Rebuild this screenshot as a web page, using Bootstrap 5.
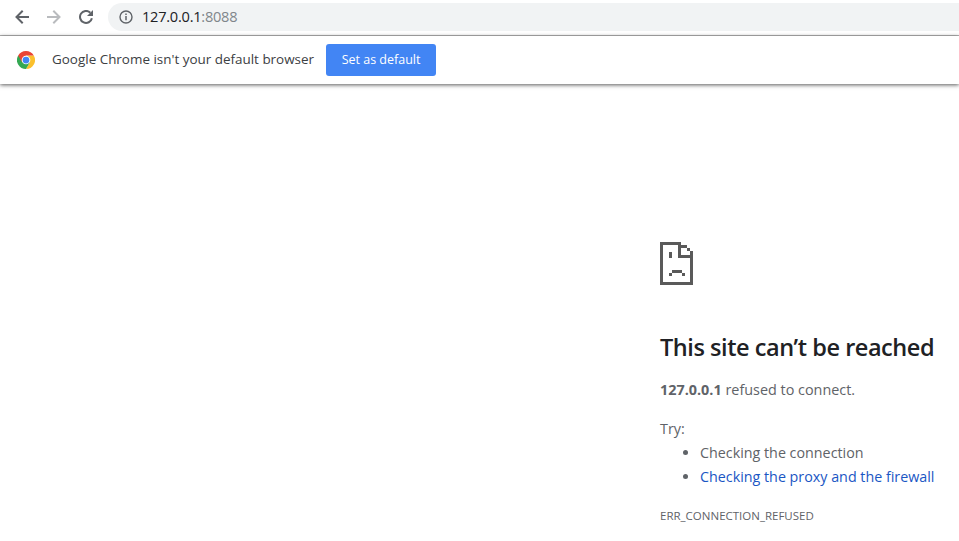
<!DOCTYPE html>
<html lang="en">
<head>
<meta charset="utf-8">
<title>127.0.0.1</title>
<link href="https://cdn.jsdelivr.net/npm/bootstrap@5.3.0/dist/css/bootstrap.min.css" rel="stylesheet">
<style>
html,body{height:100%;overflow:hidden}
body{font-family:"Open Sans","Noto Sans","Liberation Sans",sans-serif;background:#fff;color:#5f6368}
.chrome-bar{height:36px;border-bottom:1px solid #b5b5b5;padding-left:15px}
.tool-slot{width:14px;height:14px;margin-right:18px;margin-top:10px;line-height:0}
.tool-slot:nth-child(3){margin-right:15px}
.omni{height:28px;margin-top:3px;background:#f1f3f4;border-radius:14px 0 0 14px;padding-left:11px;font-size:14.6px;color:#202124;letter-spacing:-.25px}
.omni-port{color:#80868b}
.omni svg{margin-right:9px}
.info-strip{height:48px;padding-left:17px;box-shadow:0 1px 4px rgba(0,0,0,.65);position:relative;font-size:13.45px;color:#3c4043}
.info-text{margin-left:17px;margin-right:12px;margin-top:-2px}
.btn.set-default{background:#4285f4;border:0;color:#fff;font-size:12.5px;font-weight:500;width:110px;height:32px;padding:0;border-radius:3px}
.err-pane{padding:158px 0 0 660px;width:959px}
.err-icon{display:block;margin-bottom:46px}
.err-pane h1{font-size:23.5px;font-weight:600;color:#202124;line-height:32px;margin:0 0 17px;white-space:nowrap;letter-spacing:-.45px}
.err-pane p{font-size:14.4px;line-height:20px;margin:0;white-space:nowrap}
.err-host{font-weight:700}
.try-label{margin-top:19px!important}
.try-list{font-size:14.3px;line-height:20px;margin:4px 0 0;padding-left:40px;list-style:disc;white-space:nowrap}
.try-list li{margin-bottom:4px}
.try-list a{color:#1a56c4;text-decoration:none}
.err-code{font-size:11.5px;line-height:16px;margin-top:21px;color:#5f6368;white-space:nowrap}
</style>
</head>
<body>
<div class="chrome-bar d-flex align-items-start">
  <div class="tool-slot">
    <svg width="14" height="14" viewBox="0 0 14 14" fill="none" stroke="#5f6368" stroke-width="2"><path d="M14 7H2M7.7 .8 1.5 7l6.2 6.2"/></svg>
  </div>
  <div class="tool-slot">
    <svg width="14" height="14" viewBox="0 0 14 14" fill="none" stroke="#b9bbbe" stroke-width="2"><path d="M0 7h12M6.3 .8 12.5 7l-6.2 6.2"/></svg>
  </div>
  <div class="tool-slot">
    <svg width="14" height="14" viewBox="0 0 14 14" fill="none"><path d="M11.3 2.7A6 6 0 1 0 12.9 8.2" stroke="#5f6368" stroke-width="2"/><path d="M14 0V6H8z" fill="#5f6368"/></svg>
  </div>
  <div class="omni flex-grow-1 d-flex align-items-center">
    <svg width="14" height="14" viewBox="0 0 14 14" fill="none"><circle cx="7" cy="7" r="6" stroke="#5f6368" stroke-width="1.4"/><path d="M7 6v4.2M7 3.4v1.5" stroke="#5f6368" stroke-width="1.5"/></svg>
    <span>127.0.0.1<span class="omni-port">:8088</span></span>
  </div>
</div>
<div class="info-strip d-flex align-items-center">
  <svg width="18" height="18" viewBox="0 0 48 48">
    <path d="M24 48A24 24 0 0 1 3.2 12L24 24z" fill="#34a853"/>
    <path d="M24 48 34.4 30 24 12H44.8A24 24 0 0 1 24 48z" fill="#fbc02d"/>
    <path d="M24 0A24 24 0 0 1 44.8 12H24L13.6 30 3.2 12A24 24 0 0 1 24 0z" fill="#ea4335"/>
    <path d="M24 48 13.6 42 24 24 34.4 30z" fill="#34a853"/>
    <circle cx="24" cy="24" r="11.5" fill="#fff"/><circle cx="24" cy="24" r="9" fill="#4285f4"/>
  </svg>
  <span class="info-text">Google Chrome isn't your default browser</span>
  <button type="button" class="btn set-default">Set as default</button>
</div>
<main class="err-pane">
  <svg class="err-icon" width="33" height="43" viewBox="0 0 33 43" shape-rendering="crispEdges" fill="#5a5a5a">
    <path d="M0 0H21V3H0zM0 0H3V43H0zM0 40H33V43H0zM30 15H33V43H30zM18 0H21V16H18zM18 13H33V16H18zM21 3H24V6H21zM24 3H27V6H24zM27 6H30V9H27zM30 9H33V15H30zM9 10H12V16H9zM12 28H22V31H12zM9 31H12V34H9zM22 31H25V34H22z"/>
  </svg>
  <h1>This site can’t be reached</h1>
  <p><span class="err-host">127.0.0.1</span> refused to connect.</p>
  <p class="try-label">Try:</p>
  <ul class="try-list">
    <li>Checking the connection</li>
    <li><a href="#">Checking the proxy and the firewall</a></li>
  </ul>
  <div class="err-code">ERR_CONNECTION_REFUSED</div>
</main>
</body>
</html>
